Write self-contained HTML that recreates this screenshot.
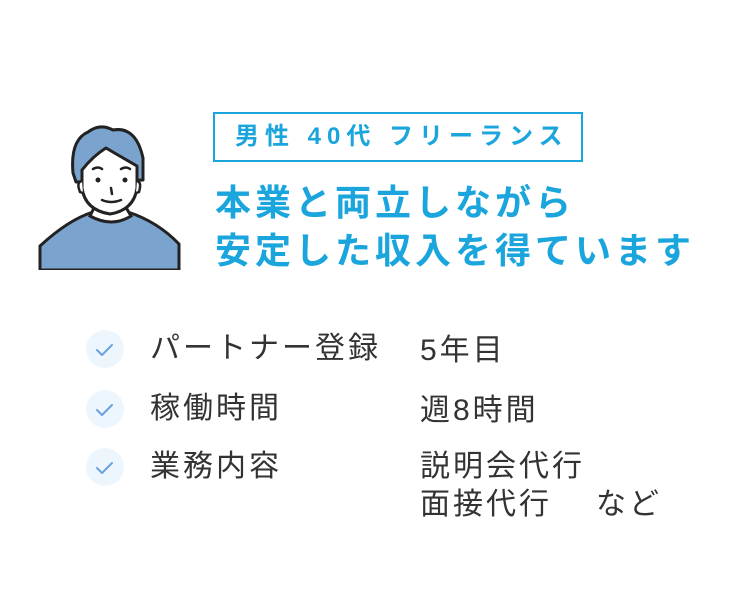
<!DOCTYPE html>
<html><head><meta charset="utf-8"><style>
body{margin:0;width:754px;height:614px;background:#fff;position:relative;font-family:"Liberation Sans","Noto Sans CJK JP",sans-serif;overflow:hidden}
.a{position:absolute;white-space:nowrap}
.tag{left:213px;top:112px;width:366px;height:46px;border:2px solid #1aa5dc;color:#1aa5dc;font-weight:bold;font-size:24px;line-height:46px;text-indent:20px;letter-spacing:6px}
.h{left:215px;color:#1aa5dc;font-weight:bold;font-size:36px;letter-spacing:4px;line-height:40px}
.t{color:#333;font-size:30px;letter-spacing:3px;line-height:38px}
.c{position:absolute;left:86px;width:38px;height:38px;border-radius:50%;background:#eef6fd}
</style></head><body>
<svg class="a" style="left:38px;top:118px" width="145" height="152" viewBox="0 0 145 152">
<path d="M2 152 L2 128 Q30 102 55 94 L90 94 Q120 104 141 126 L141 152 Z" fill="#7aa3cd" stroke="#222" stroke-width="3" stroke-linejoin="round"/>
<path d="M52 98 L58 86 L86 86 L93 98 Q74 110 52 98 Z" fill="#fff" stroke="#222" stroke-width="3"/>
<path d="M62 84 L62 92 Q72 98 82 92 L82 82" fill="#fff" stroke="#222" stroke-width="3"/>
<path d="M35 55 Q32 22 50 14 Q62 5 75 12 Q98 8 105 40 L105 62 L38 64 Z" fill="#7aa3cd" stroke="#222" stroke-width="3" stroke-linejoin="round"/>
<path d="M44 52 Q55 38 68 30 Q85 40 99 48 L99 70 Q96 92 72 96 Q47 92 44 70 Z" fill="#fff" stroke="#222" stroke-width="3" stroke-linejoin="round"/>
<path d="M44 63 Q38 64 42 74 L45 75 M99 63 Q104 64 101 74 L98 75" fill="#fff" stroke="#222" stroke-width="2.5"/>
<circle cx="60" cy="62" r="2.5" fill="#222"/><circle cx="87" cy="62" r="2.5" fill="#222"/>
<path d="M55 51 Q60 48 64 51 M83 51 Q88 48 92 51" stroke="#222" stroke-width="2.5" fill="none" stroke-linecap="round"/>
<path d="M73 70 L74 76" stroke="#222" stroke-width="2.5" stroke-linecap="round"/>
<path d="M64 82 Q73 86 83 82" stroke="#222" stroke-width="2.5" fill="none" stroke-linecap="round"/>
</svg>
<div class="a tag">男性 40代 フリーランス</div>
<div class="a h" style="top:183px">本業と両立しながら</div>
<div class="a h" style="top:231px">安定した収入を得ています</div>
<div class="c" style="top:330px"></div><div class="c" style="top:390px"></div><div class="c" style="top:448px"></div>
<svg class="a" style="left:86px;top:330px" width="38" height="160"><g stroke="#6aa2dd" stroke-width="2" fill="none" stroke-linecap="round" stroke-linejoin="round"><path d="M11 20 L16 25 L26 15"/><path d="M11 80 L16 85 L26 75"/><path d="M11 138 L16 143 L26 133"/></g></svg>
<div class="a t" style="left:150px;top:330px">パートナー登録</div>
<div class="a t" style="left:420px;top:332px">5年目</div>
<div class="a t" style="left:150px;top:390px">稼働時間</div>
<div class="a t" style="left:420px;top:392px">週8時間</div>
<div class="a t" style="left:150px;top:448px">業務内容</div>
<div class="a t" style="left:420px;top:448px">説明会代行</div>
<div class="a t" style="left:420px;top:486px">面接代行<span style="margin-left:44px">など</span></div>
</body></html>
